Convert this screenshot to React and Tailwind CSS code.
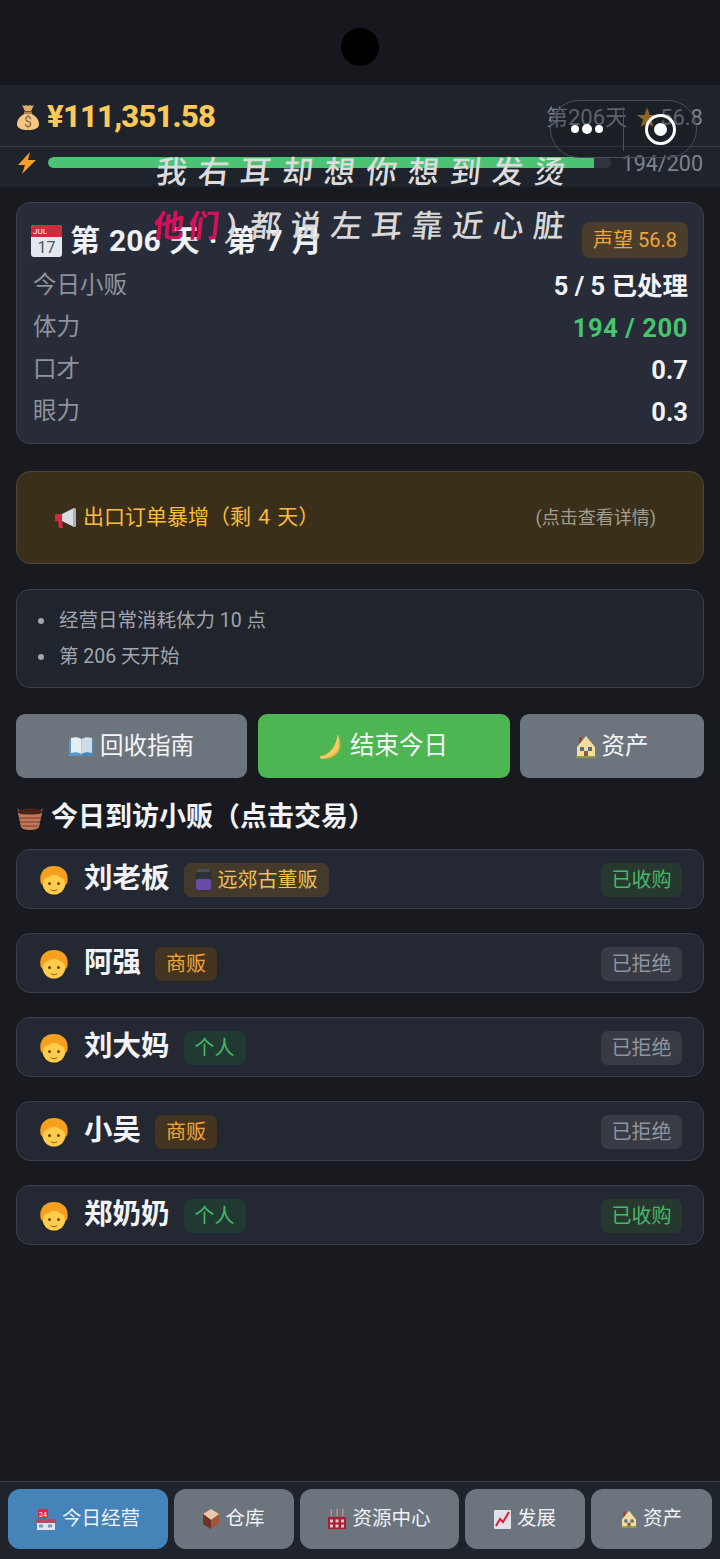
const FONT = "font-['Roboto','Noto_Sans_CJK_SC',sans-serif]";

const Bag = () => (
  <svg width="24" height="26" viewBox="0 0 24 26"><path d="M6 1c2 1 3 1 4 0 1 1 3 1 4 0 1 1 3 1 4 0l-3 6H9z" fill="#e3ad68"/><path d="M8 7.500h8v2H8z" fill="#b8823e"/><path d="M9 9.500C4 12 1 16 1 20c0 4 4 6 11 6s11-2 11-6c0-4-3-8-8-10.500z" fill="#f5c782"/><text x="12" y="23" fontSize="14" fill="#8a6a3a" textAnchor="middle">$</text></svg>
);
const Bolt = () => (
  <svg width="20" height="22" viewBox="0 0 20 22"><path d="M13 0L1 13h7l-3 9L19 8h-8z" fill="#f59e2c"/></svg>
);
const Cal = () => (
  <svg width="31" height="33" viewBox="0 0 31 33"><rect x="0" y="1" width="31" height="32" rx="3" fill="#e3e8ee"/><path d="M0 4a3 3 0 013-3h25a3 3 0 013 3v9H0z" fill="#c8303c"/><text x="9" y="10" fontSize="8" fill="#fff" textAnchor="middle">JUL</text><text x="15.500" y="29" fontSize="16" fill="#46586a" textAnchor="middle">17</text></svg>
);
const Horn = () => (
  <svg width="24" height="24" viewBox="0 0 24 24"><path d="M2 8h7v7H2z" fill="#d5283c"/><path d="M5 15h4l1 7H6z" fill="#d5283c"/><path d="M9 8l12-6v19L9 15z" fill="#d9dde2"/><rect x="20" y="2" width="3" height="19" rx="1.500" fill="#aab2ba"/></svg>
);
const Book = () => (
  <svg width="25" height="20" viewBox="0 0 25 20"><path d="M0 2h12l1 17H0z" fill="#5b97c9"/><path d="M25 2H12.500v17H25z" fill="#4a86b8"/><path d="M2 1c4-1 7-1 10.500 1v15C9 15 6 15 2 16z" fill="#e6edf3"/><path d="M23 1c-4-1-7-1-10.500 1v15c3.500-2 6.500-2 10.500-1z" fill="#cfdbe5"/></svg>
);
const Moon = () => (
  <svg width="25" height="28" viewBox="0 0 24 28"><path d="M18 1c5 10 2 24-16 25-2-1-2-3 0-3 7-1 15-9 16-22z" fill="#f6c95e"/><path d="M19 3c3 9 1 21-16 23 12 0 17-6 18-13 0-4-1-8-2-10z" fill="#e8ad3e"/></svg>
);
const House = ({ w = 20, h = 23 }) => (
  <svg width={w} height={h} viewBox="0 0 20 23"><rect x="3" y="2" width="2.500" height="6" fill="#a33"/><path d="M10 1L1 12v9h18v-9z" fill="#f3dc9c"/><path d="M0 21h20v2H0z" fill="#8a9a48"/><rect x="4" y="12" width="4" height="4" fill="#5a6c8a"/><rect x="12" y="12" width="4" height="4" fill="#5a6c8a"/><rect x="8" y="16" width="4" height="5" fill="#8a5a3a"/></svg>
);
const Basket = () => (
  <svg width="28" height="24" viewBox="0 0 28 24"><path d="M1 2l2 6h22l2-6-3 3H4z" fill="#a86a4a"/><ellipse cx="14" cy="6" rx="12" ry="3.500" fill="#4a2418"/><path d="M2 7c3 2 21 2 24 0l-3 14c-1 2-4 3-9 3s-8-1-9-3z" fill="#c4785a"/><path d="M3 12h22M4 16h20M6 20h16" stroke="#8f4f38" strokeWidth="1.500"/></svg>
);
const Face = () => (
  <svg width="30" height="30" viewBox="0 0 30 30"><ellipse cx="15" cy="18" rx="11.500" ry="11.500" fill="#ffcc4d"/><path d="M1.500 17C0 7 6 1 15 1s15 6 13.500 16c-.5 2-2 3-2.500 3 0-4-1-6-3-7-4-1-3-3-8-3-4 0-4 2-8 3-2 1-3 3-3 7-.5 0-2-1-2.500-3z" fill="#f6a01f"/><circle cx="10.500" cy="18.500" r="1.500" fill="#664500"/><circle cx="19.500" cy="18.500" r="1.500" fill="#664500"/><path d="M11 24c2.500 1.500 5.500 1.500 8 0-2 3-6 3-8 0z" fill="#a0622d"/></svg>
);
const Jar = () => (
  <svg width="17" height="24" viewBox="0 0 17 24"><rect x="1" y="1" width="15" height="22" rx="3" fill="#2f3138"/><rect x="1" y="11" width="15" height="11" rx="2" fill="#6a4aa8"/><rect x="2" y="1" width="13" height="3" fill="#4a4c54"/></svg>
);
const Shop = () => (
  <svg width="20" height="21" viewBox="0 0 20 21"><rect x="2" y="0" width="10" height="9" rx="1" fill="#cf2f3f"/><text x="7" y="7.500" fontSize="7" fill="#fff" textAnchor="middle">24</text><rect x="0" y="10" width="20" height="4" fill="#b64a62"/><rect x="1" y="14" width="18" height="7" fill="#dfe5ec"/><rect x="3" y="15.500" width="4" height="3" fill="#7a9ac0"/><rect x="12" y="15.500" width="4" height="3" fill="#7a9ac0"/></svg>
);
const Box = () => (
  <svg width="16" height="20" viewBox="0 0 16 20"><path d="M8 0l8 5v10l-8 5-8-5V5z" fill="#a0563a"/><path d="M8 0l8 5-8 6-8-6z" fill="#ecc9ab"/><path d="M0 5l8 6v9l-8-5z" fill="#6b3424"/></svg>
);
const Factory = () => (
  <svg width="18" height="20" viewBox="0 0 18 20"><path d="M2.500 0h1.500v7H2.500zM8.250 0h1.500v7h-1.500zM14 0h1.500v7H14z" fill="#c88a94"/><path d="M0 8h18v12H0z" fill="#a81e34"/><path d="M2 10.500h3v3H2zM7.500 10.500h3v3h-3zM13 10.500h3v3h-3zM2 15.500h3v3H2zM7.500 15.500h3v3h-3zM13 15.500h3v3h-3z" fill="#e8c8cc"/></svg>
);
const Chart = () => (
  <svg width="17" height="19" viewBox="0 0 17 19"><rect width="17" height="19" rx="1" fill="#dfe3e8"/><path d="M2 16l4-7 3 3 6-10" stroke="#d5283c" strokeWidth="2.200" fill="none"/></svg>
);

const Stat = ({ label, value, cls = "text-[#f1f3f6]" }) => (
  <div className="flex h-[42px] items-center justify-between">
    <span className="text-[23.500px] text-[#8e939d]">{label}</span>
    <span className={`text-[25.500px] font-bold ${cls}`}>{value}</span>
  </div>
);

const Action = ({ icon, text, cls }) => (
  <button className={`flex h-[64px] items-center justify-center gap-[6px] rounded-[9px] pt-[1px] text-[#f4f6f8] ${cls}`}>
    {icon}
    <span>{text}</span>
  </button>
);

const Visitor = ({ name, tag, tagCls, tagIcon, status, bought }) => (
  <div className="flex h-[60px] items-center rounded-[14px] border border-[#393e4a] bg-[#242832] pl-[22px] pr-[21px] pt-[1px]">
    <Face />
    <span className="ml-[15px] text-[28.500px] font-bold text-[#f1f3f6]">{name}</span>
    <span className={`ml-[14px] flex h-[34px] items-center gap-[6px] rounded-[7px] px-[11px] text-[20px] ${tagCls}`}>
      {tagIcon}
      {tag}
    </span>
    <span className={`ml-auto flex h-[34px] items-center rounded-[7px] px-[10.500px] text-[20px] ${bought ? "bg-[#27392f] text-[#46b768]" : "bg-[#383b43] text-[#8e939d]"}`}>
      {status}
    </span>
  </div>
);

const Nav = ({ icon, text, cls, w }) => (
  <button className={`flex h-[60px] items-center justify-center gap-[6px] rounded-[12px] text-[19.500px] text-[#f0f2f5] ${w} ${cls}`}>
    {icon}
    <span>{text}</span>
  </button>
);

const individual = "bg-[#203a33] text-[#46b768]";
const merchant = "bg-[#44331f] text-[#f0a63c]";

export default function App() {
  return (
    <div className={`relative flex h-[1559px] w-[720px] flex-col overflow-hidden bg-[#181a20] ${FONT}`}>
      <div className="flex h-[85px] items-center justify-center bg-[#16181d] pt-[9px]">
        <div className="h-[38px] w-[38px] rounded-full bg-black" />
      </div>

      <div className="flex h-[62px] items-center justify-between border-b border-[#3a3e47] bg-[#1f232c] pl-[16px] pr-[17px] pt-[3px]">
        <div className="flex items-center gap-[7px]">
          <Bag />
          <span className="text-[31px] font-extrabold tracking-[-0.800px] text-[#fcc958]">¥111,351.58</span>
        </div>
        <div className="flex items-center gap-[9px] text-[22px] text-[#7d828c]">
          <span>第206天</span>
          <span><span className="mr-[2px] text-[#c8862e]">★</span>56.8</span>
        </div>
      </div>

      <div className="flex h-[40px] items-center bg-[#1f232c] pb-[9px] pl-[17px] pr-[17px]">
        <Bolt />
        <div className="ml-[11px] h-[11px] w-[563px] overflow-hidden rounded-full bg-[#30343f]">
          <div className="h-full w-[546px] rounded-l-full bg-[#4cc372]" />
        </div>
        <span className="ml-auto pt-[3px] text-[21.500px] text-[#7d828c]">194/200</span>
      </div>

      <div className="flex flex-1 flex-col px-[16px] pt-[15px]">
        <section className="rounded-[14px] border border-[#3c414d] bg-[#272c38] pb-[10px] pl-[16px] pr-[15px] pt-[18px]">
          <div className="mb-[6px] flex h-[38px] items-center justify-between">
            <div className="-ml-[2px] flex items-center gap-[8px]">
              <Cal />
              <span className="text-[30px] font-bold text-[#eef1f5] [word-spacing:1.500px]">第 206 天 · 第 7 月</span>
            </div>
            <span className="rounded-[8px] bg-[#4a3d2b] px-[11px] py-[3px] text-[20px] text-[#f0a63c]">声望 56.8</span>
          </div>
          <Stat label="今日小贩" value="5 / 5 已处理" />
          <Stat label="体力" value="194 / 200" cls="tracking-[0.600px] text-[#46c46e]" />
          <Stat label="口才" value="0.7" />
          <Stat label="眼力" value="0.3" />
        </section>

        <button className="mt-[27px] flex h-[93px] items-center justify-between rounded-[14px] border border-[#4d4536] bg-[#3a2f18] pl-[36px] pr-[47px]">
          <span className="flex items-center gap-[6px] text-[21px] text-[#fbbb3e] [word-spacing:2px]">
            <Horn />
            出口订单暴增（剩 4 天）
          </span>
          <span className="text-[18px] text-[#a39d90]">(点击查看详情)</span>
        </button>

        <section className="mt-[25px] flex h-[99px] flex-col justify-center rounded-[14px] border border-[#3c414d] bg-[#20242d] pl-[21px]">
          {["经营日常消耗体力 10 点", "第 206 天开始"].map((t) => (
            <div key={t} className="flex h-[36px] items-center text-[19.500px] text-[#a0a4ac]">
              <span className="mr-[15px] h-[6px] w-[6px] rounded-full bg-[#a0a4ac]" />
              {t}
            </div>
          ))}
        </section>

        <div className="mt-[26px] flex justify-between">
          <Action icon={<Book />} text="回收指南" cls="w-[231px] bg-[#6c757d] text-[23.500px]" />
          <Action icon={<Moon />} text="结束今日" cls="w-[252px] bg-[#4db551] text-[24.500px]" />
          <Action icon={<House />} text="资产" cls="w-[184px] bg-[#6c757d] text-[23.500px]" />
        </div>

        <h2 className="mt-[20px] flex h-[38px] items-center gap-[7px] pt-[1px] text-[27px] font-bold text-[#f1f3f6]">
          <Basket />
          今日到访小贩（点击交易）
        </h2>

        <div className="mt-[13px] flex flex-col gap-[24px]">
          <Visitor name="刘老板" tag="远郊古董贩" tagCls="bg-[#433a2c] text-[#f3c058]" tagIcon={<Jar />} status="已收购" bought />
          <Visitor name="阿强" tag="商贩" tagCls={merchant} status="已拒绝" />
          <Visitor name="刘大妈" tag="个人" tagCls={individual} status="已拒绝" />
          <Visitor name="小吴" tag="商贩" tagCls={merchant} status="已拒绝" />
          <Visitor name="郑奶奶" tag="个人" tagCls={individual} status="已收购" bought />
        </div>
      </div>

      <nav className="flex h-[78px] gap-[6px] border-t border-[#3a3e47] bg-[#1f232c] pl-[8px] pr-[8px] pt-[7px]">
        <Nav icon={<Shop />} text="今日经营" w="w-[160px]" cls="bg-[#4583b8]" />
        <Nav icon={<Box />} text="仓库" w="w-[120px]" cls="bg-[#6c757d]" />
        <Nav icon={<Factory />} text="资源中心" w="w-[159px]" cls="bg-[#6c757d]" />
        <Nav icon={<Chart />} text="发展" w="w-[120px]" cls="bg-[#6c757d]" />
        <Nav icon={<House w={16} h={18} />} text="资产" w="w-[121px]" cls="bg-[#6c757d]" />
      </nav>

      {/* WeChat capsule, over the page */}
      <div className="absolute left-[550px] top-[100px] flex h-[58px] w-[147px] items-center rounded-full border border-[#4a4e57] bg-[#15171c]/30">
        <div className="flex h-[44px] w-[73px] items-center justify-center gap-[3px] border-r border-[#4a4e57]">
          <span className="h-[8px] w-[8px] rounded-full bg-white" />
          <span className="h-[10px] w-[10px] rounded-full bg-white" />
          <span className="h-[8px] w-[8px] rounded-full bg-white" />
        </div>
        <div className="flex flex-1 items-center justify-center">
          <div className="flex h-[31px] w-[31px] items-center justify-center rounded-full border-[3px] border-white">
            <div className="h-[13px] w-[13px] rounded-full bg-white" />
          </div>
        </div>
      </div>

      {/* floating lyrics overlay */}
      <div className="pointer-events-none absolute left-[156px] top-[153px] -skew-x-6 whitespace-nowrap text-[31px] font-medium leading-[40px] tracking-[11px] text-[#dcdcdc]">
        我右耳却想你想到发烫
      </div>
      <div className="pointer-events-none absolute left-[153px] top-[207px] -skew-x-6 whitespace-nowrap text-[31px] font-medium leading-[40px] text-[#d8d8d8]">
        <span className="font-bold tracking-[4px] text-[#d6105c]">他们</span>
        <span className="ml-[3px] mr-[13px]">)</span>
        <span className="tracking-[9.500px]">都说左耳靠近心脏</span>
      </div>
    </div>
  );
}
